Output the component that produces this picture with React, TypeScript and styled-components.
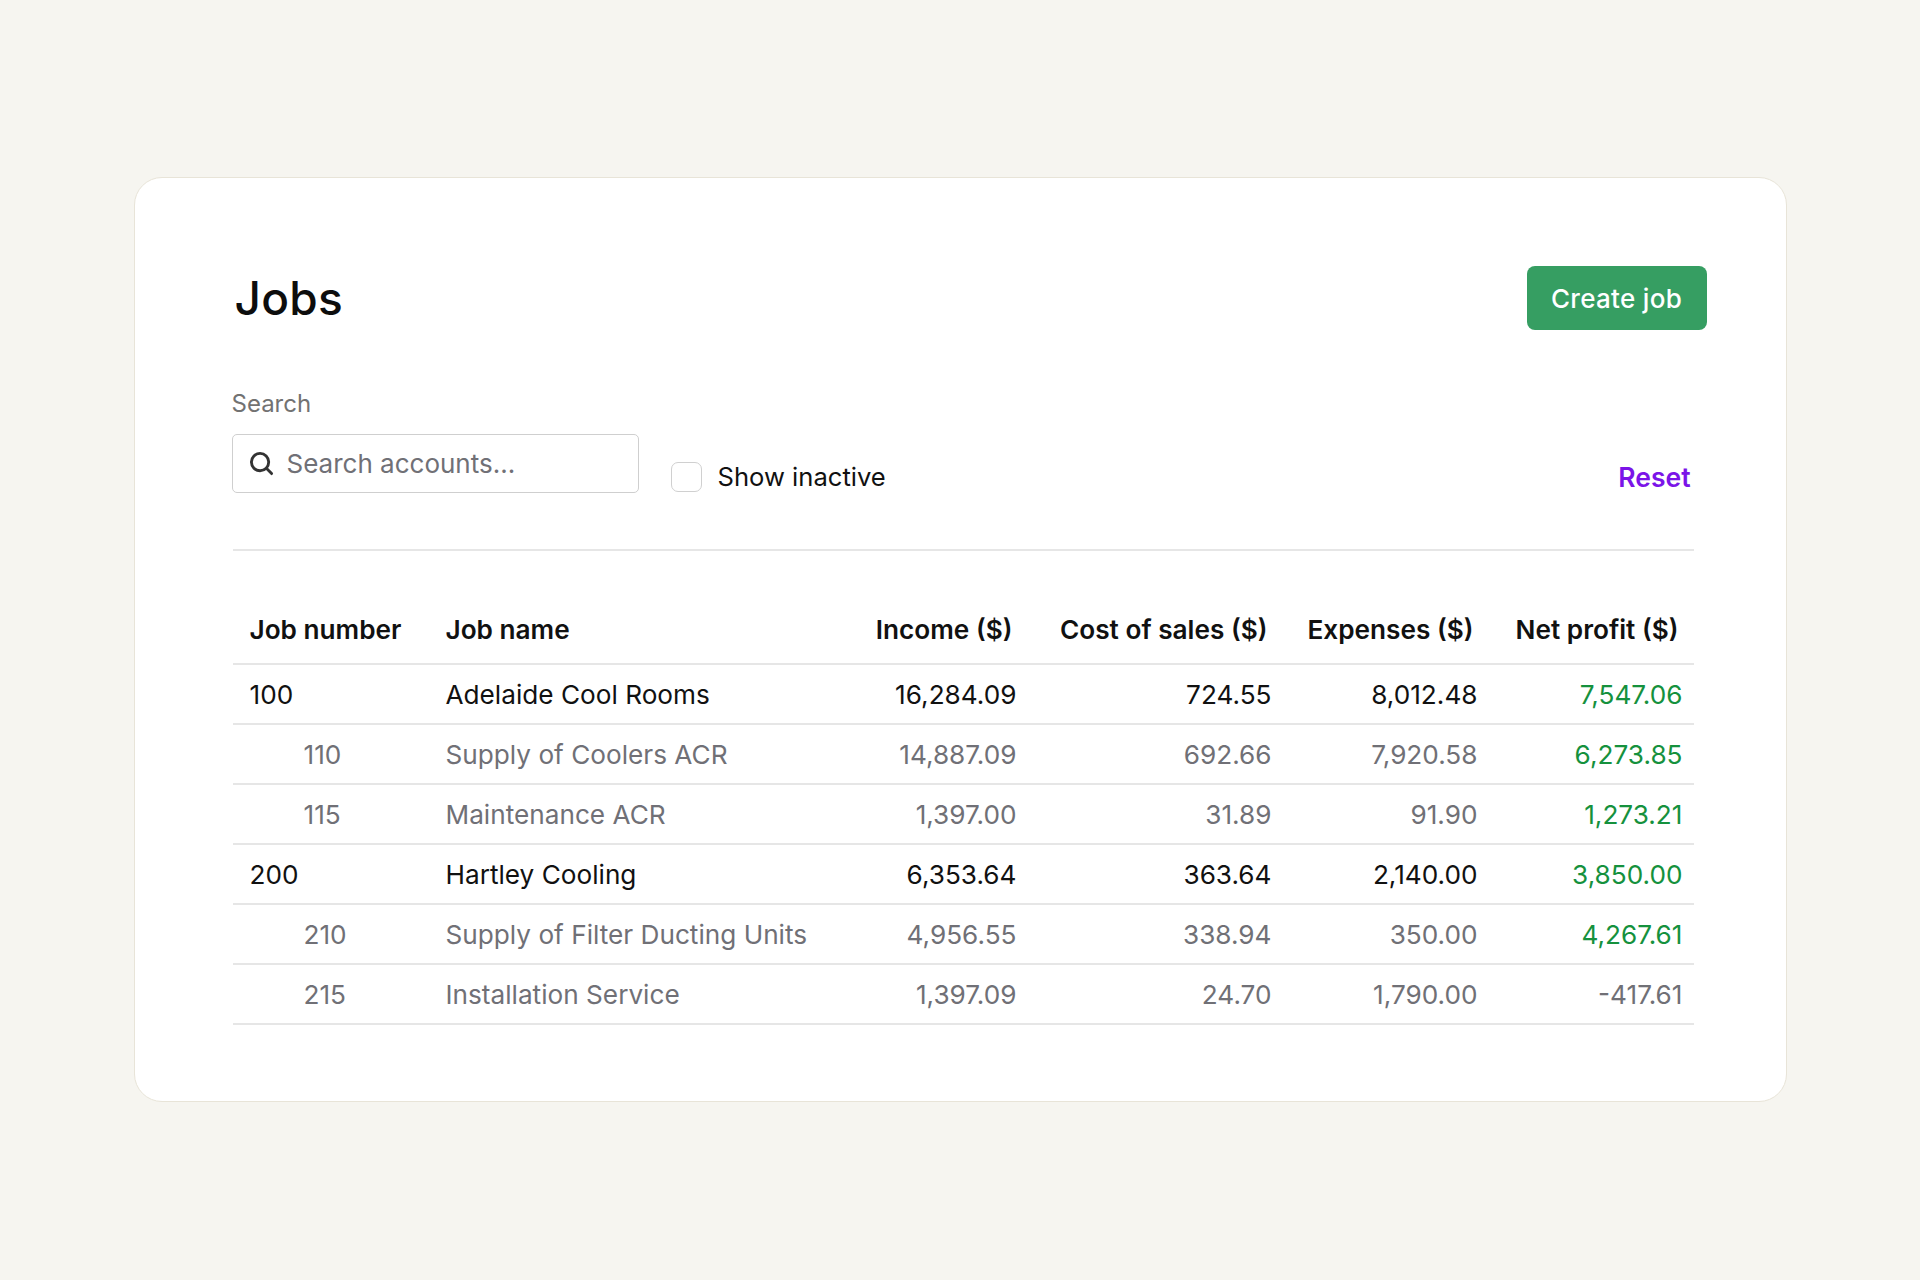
import styled, { createGlobalStyle } from 'styled-components';

const GlobalStyle = createGlobalStyle`
  * { box-sizing: border-box; }
  html, body {
    margin: 0;
    padding: 0;
    background: #f6f5f0;
    font-family: Inter, "Noto Sans", "Liberation Sans", sans-serif;
    color: #111111;
  }
`;

const Page = styled.div`
  min-height: 100vh;
  display: flex;
  justify-content: center;
  align-items: flex-start;
  padding-top: 177px;
`;

const Card = styled.section`
  width: 1653px;
  background: #ffffff;
  border: 1.5px solid #e8e4d8;
  border-radius: 28px;
  padding: 88px 92px 76px 98px;
`;

const TitleRow = styled.header`
  display: flex;
  align-items: center;
  justify-content: space-between;
  height: 64px;
`;

const Title = styled.h1`
  margin: 0 0 0 2px;
  font-size: 46px;
  font-weight: 500;
  letter-spacing: 0.3px;
  line-height: 1;
  color: #0d0d0d;
`;

const PrimaryButton = styled.button`
  width: 180px;
  height: 64px;
  margin-right: -13px;
  border: none;
  border-radius: 8px;
  background: #369e62;
  color: #ffffff;
  font-family: inherit;
  font-size: 26px;
  font-weight: 500;
  letter-spacing: 0.3px;
  cursor: pointer;
`;

const FilterRow = styled.div`
  display: flex;
  align-items: flex-end;
  margin-top: 59px;
`;

const Field = styled.div`
  display: flex;
  flex-direction: column;
  gap: 16px;
  margin-left: -1px;
`;

const FieldLabel = styled.label`
  font-size: 24px;
  line-height: 29px;
  color: #727272;
`;

const InputBox = styled.div`
  width: 407px;
  height: 59px;
  display: flex;
  align-items: center;
  gap: 11px;
  padding: 0 16px;
  border: 1.5px solid #cfcfcf;
  border-radius: 5px;
  color: #333333;
`;

const Input = styled.input`
  flex: 1;
  min-width: 0;
  border: none;
  outline: none;
  background: transparent;
  font-family: inherit;
  font-size: 26px;
  color: #111;
  &::placeholder { color: #707076; }
`;

const CheckLabel = styled.label`
  display: flex;
  align-items: center;
  gap: 16px;
  margin-left: 32px;
  margin-bottom: 1px;
  font-size: 25.6px;
  color: #111;
`;

const CheckBox = styled.span`
  width: 31px;
  height: 30px;
  border: 1.5px solid #d0d0d0;
  border-radius: 7px;
  background: #fff;
`;

const ResetLink = styled.a`
  margin-left: auto;
  margin-right: 3px;
  font-size: 26.5px;
  font-weight: 600;
  color: #7b14e8;
  text-decoration: none;
  cursor: pointer;
`;

const Divider = styled.hr`
  margin: 56px 0 52px;
  border: none;
  border-top: 2px solid #e6e6e6;
`;

const Table = styled.table`
  width: 100%;
  border-collapse: collapse;
  table-layout: fixed;
  font-size: 26.2px;
`;

const Th = styled.th<{ $num?: boolean }>`
  height: 61px;
  padding: 0 ${({ $num }) => ($num ? '15px' : '17px')} 7px 17px;
  text-align: ${({ $num }) => ($num ? 'right' : 'left')};
  font-weight: 600;
  color: #111;
  border-bottom: 2px solid #e6e6e6;
  white-space: nowrap;
`;

const Tr = styled.tr`
  border-bottom: 2px solid #e6e6e6;
`;

const Td = styled.td<{ $num?: boolean; $sub?: boolean; $tone?: 'profit' }>`
  height: 60px;
  padding: 0 ${({ $num }) => ($num ? '11px' : '17px')} 0 17px;
  text-align: ${({ $num }) => ($num ? 'right' : 'left')};
  white-space: nowrap;
  color: ${({ $sub, $tone }) => ($tone === 'profit' ? '#15913d' : $sub ? '#707076' : '#111')};
`;

const JobNumber = styled.span<{ $sub?: boolean }>`
  padding-left: ${({ $sub }) => ($sub ? '54px' : '0')};
`;

function SearchIcon() {
  return (
    <svg width="25" height="25" viewBox="0 0 26 26" fill="none" stroke="currentColor" strokeWidth="3" strokeLinecap="round">
      <circle cx="11.5" cy="11.5" r="9" />
      <path d="M18.3 18.3 23.5 23.5" />
    </svg>
  );
}

type Job = {
  num: string;
  name: string;
  income: string;
  cost: string;
  expenses: string;
  profit: string;
  sub?: boolean;
  loss?: boolean;
};

const jobs: Job[] = [
  { num: '100', name: 'Adelaide Cool Rooms', income: '16,284.09', cost: '724.55', expenses: '8,012.48', profit: '7,547.06' },
  { num: '110', name: 'Supply of Coolers ACR', income: '14,887.09', cost: '692.66', expenses: '7,920.58', profit: '6,273.85', sub: true },
  { num: '115', name: 'Maintenance ACR', income: '1,397.00', cost: '31.89', expenses: '91.90', profit: '1,273.21', sub: true },
  { num: '200', name: 'Hartley Cooling', income: '6,353.64', cost: '363.64', expenses: '2,140.00', profit: '3,850.00' },
  { num: '210', name: 'Supply of Filter Ducting Units', income: '4,956.55', cost: '338.94', expenses: '350.00', profit: '4,267.61', sub: true },
  { num: '215', name: 'Installation Service', income: '1,397.09', cost: '24.70', expenses: '1,790.00', profit: '-417.61', sub: true, loss: true },
];

export default function App() {
  return (
    <>
      <GlobalStyle />
      <Page>
        <Card>
          <TitleRow>
            <Title>Jobs</Title>
            <PrimaryButton>Create job</PrimaryButton>
          </TitleRow>

          <FilterRow>
            <Field>
              <FieldLabel htmlFor="search">Search</FieldLabel>
              <InputBox>
                <SearchIcon />
                <Input id="search" placeholder="Search accounts..." />
              </InputBox>
            </Field>
            <CheckLabel>
              <CheckBox />
              Show inactive
            </CheckLabel>
            <ResetLink>Reset</ResetLink>
          </FilterRow>

          <Divider />

          <Table>
            <colgroup>
              <col style={{ width: 196 }} />
              <col style={{ width: 399 }} />
              <col style={{ width: 200 }} />
              <col style={{ width: 255 }} />
              <col style={{ width: 206 }} />
              <col style={{ width: 205 }} />
            </colgroup>
            <thead>
              <tr>
                <Th>Job number</Th>
                <Th>Job name</Th>
                <Th $num>Income ($)</Th>
                <Th $num>Cost of sales ($)</Th>
                <Th $num>Expenses ($)</Th>
                <Th $num>Net profit ($)</Th>
              </tr>
            </thead>
            <tbody>
              {jobs.map((j) => (
                <Tr key={j.num}>
                  <Td $sub={j.sub}>
                    <JobNumber $sub={j.sub}>{j.num}</JobNumber>
                  </Td>
                  <Td $sub={j.sub}>{j.name}</Td>
                  <Td $num $sub={j.sub}>{j.income}</Td>
                  <Td $num $sub={j.sub}>{j.cost}</Td>
                  <Td $num $sub={j.sub}>{j.expenses}</Td>
                  <Td $num $sub={j.sub} $tone={j.loss ? undefined : 'profit'}>{j.profit}</Td>
                </Tr>
              ))}
            </tbody>
          </Table>
        </Card>
      </Page>
    </>
  );
}
